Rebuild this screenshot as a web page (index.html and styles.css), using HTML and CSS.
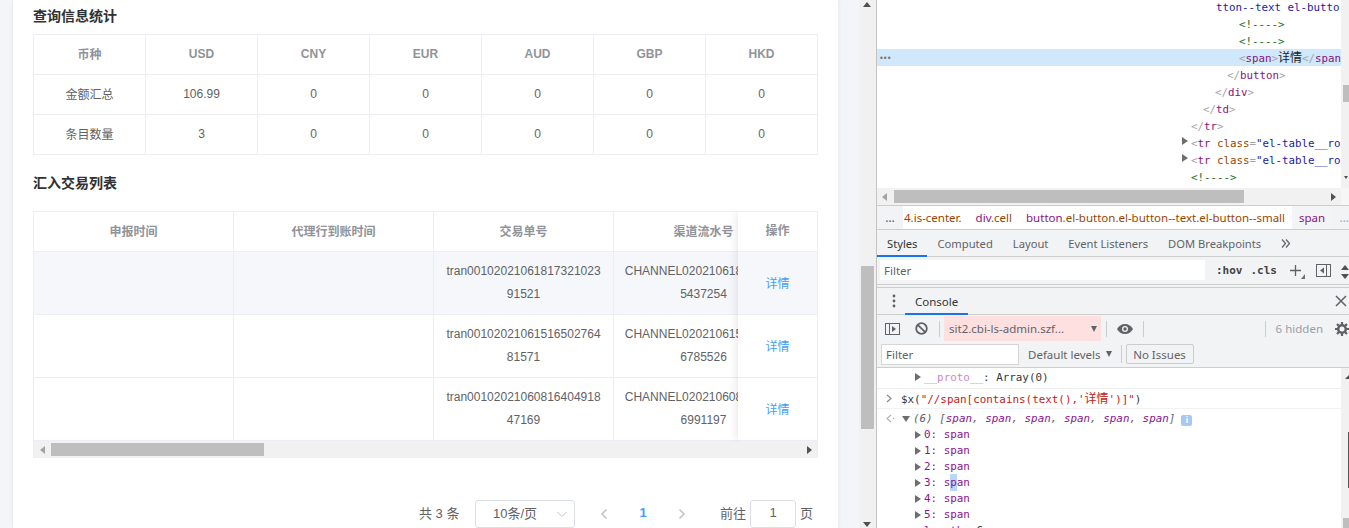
FILE: index.html
```html
<!DOCTYPE html>
<html lang="zh">
<head>
<meta charset="utf-8">
<title>查询信息统计</title>
<link rel="stylesheet" href="styles.css">
</head>
<body>
<div class="app">
  <main class="page">
    <section class="card">
      <h2 class="title title-first">查询信息统计</h2>
      <div class="tbl-wrap">
        <table class="tbl">
          <tr><th>币种</th><th>USD</th><th>CNY</th><th>EUR</th><th>AUD</th><th>GBP</th><th>HKD</th></tr>
          <tr><td>金额汇总</td><td>106.99</td><td>0</td><td>0</td><td>0</td><td>0</td><td>0</td></tr>
          <tr><td>条目数量</td><td>3</td><td>0</td><td>0</td><td>0</td><td>0</td><td>0</td></tr>
        </table>
      </div>
      <h2 class="title title-second">汇入交易列表</h2>
      <div class="tbl-wrap list-wrap">
        <div class="list-clip">
          <table class="tbl list">
            <tr><th class="w200">申报时间</th><th class="w200">代理行到账时间</th><th class="w180">交易单号</th><th class="w180">渠道流水号</th></tr>
            <tr class="hl"><td></td><td></td><td>tran0010202106181732102391521</td><td>CHANNEL0202106181732105437254</td></tr>
            <tr><td></td><td></td><td>tran0010202106151650276481571</td><td>CHANNEL0202106151650276785526</td></tr>
            <tr><td></td><td></td><td>tran0010202106081640491847169</td><td>CHANNEL0202106081640496991197</td></tr>
          </table>
        </div>
        <div class="fixed-col">
          <div class="fx-head">操作</div>
          <div class="fx-cell hl">详情</div>
          <div class="fx-cell">详情</div>
          <div class="fx-cell">详情</div>
        </div>
        <div class="hbar list-bar">
          <span class="arr arr-l"></span>
          <span class="thumb list-thumb"></span>
          <span class="arr arr-r"></span>
        </div>
      </div>
      <div class="pager">
        <span class="pg-total">共 3 条</span>
        <div class="pg-select"><span>10条/页</span>
          <svg class="pg-caret" width="12" height="12" viewBox="0 0 12 12"><path d="M1.5 4l4.500 4.500L10.500 4" fill="none" stroke="#c0c4cc" stroke-width="1"/></svg>
        </div>
        <svg class="pg-prev" width="10" height="12" viewBox="0 0 10 12"><path d="M7.500 1.500L3 6l4.500 4.500" fill="none" stroke="#c0c4cc" stroke-width="1.600"/></svg>
        <span class="pg-num">1</span>
        <svg class="pg-next" width="10" height="12" viewBox="0 0 10 12"><path d="M2.500 1.500L7 6l-4.500 4.500" fill="none" stroke="#c0c4cc" stroke-width="1.600"/></svg>
        <span class="pg-go">前往</span>
        <div class="pg-input">1</div>
        <span class="pg-unit">页</span>
      </div>
    </section>
  </main>

  <aside class="page-scroll">
    <span class="arr arr-u"></span>
    <span class="page-thumb"></span>
    <span class="arr arr-d"></span>
  </aside>

  <div class="devtools">
    <div class="elements">
      <div class="el-tree">
        <div class="el-row i-tton"><span class="v">tton--text el-butto</span></div>
        <div class="el-row i6"><span class="c">&lt;!----&gt;</span></div>
        <div class="el-row i6"><span class="c">&lt;!----&gt;</span></div>
        <div class="el-row i6 sel"><span class="dots">•••</span><span class="b">&lt;</span><span class="t">span</span><span class="b">&gt;</span><span class="txt">详情</span><span class="b">&lt;/</span><span class="t">span</span></div>
        <div class="el-row i5"><span class="b">&lt;/</span><span class="t">button</span><span class="b">&gt;</span></div>
        <div class="el-row i4"><span class="b">&lt;/</span><span class="t">div</span><span class="b">&gt;</span></div>
        <div class="el-row i3"><span class="b">&lt;/</span><span class="t">td</span><span class="b">&gt;</span></div>
        <div class="el-row i2"><span class="b">&lt;/</span><span class="t">tr</span><span class="b">&gt;</span></div>
        <div class="el-row i2"><span class="tri tri-el"></span><span class="b">&lt;</span><span class="t">tr</span> <span class="a">class</span><span class="b">=</span><span class="v">"el-table__ro</span></div>
        <div class="el-row i2"><span class="tri tri-el"></span><span class="b">&lt;</span><span class="t">tr</span> <span class="a">class</span><span class="b">=</span><span class="v">"el-table__ro</span></div>
        <div class="el-row i2"><span class="c">&lt;!----&gt;</span></div>
      </div>
      <div class="el-vbar"><span class="el-vthumb"></span><span class="arr arr-d el-vdown"></span></div>
    </div>
    <div class="el-hbar">
      <div class="hbar el-hbar-track">
        <span class="arr arr-l"></span>
        <span class="thumb el-thumb"></span>
        <span class="arr arr-r"></span>
      </div>
      <div class="corner"></div>
    </div>
    <nav class="crumbs">
      <span class="cr-dots">…</span>
      <div class="cr-white">
        <span class="cr cr-first"><span class="ca">4.is-center.</span></span>
        <span class="cr"><span class="ct">div</span><span class="ca">.cell</span></span>
        <span class="cr"><span class="ct">button</span><span class="ca">.el-button.el-button--text.el-button--small</span></span>
      </div>
      <span class="cr cr-cur"><span class="ct">span</span></span>
      <span class="cr-dots cr-dots-r">…</span>
    </nav>
    <div class="tabs">
      <span class="tab on">Styles</span>
      <span class="tab">Computed</span>
      <span class="tab">Layout</span>
      <span class="tab">Event Listeners</span>
      <span class="tab">DOM Breakpoints</span>
      <span class="tab more">
        <svg width="10" height="9" viewBox="0 0 10 9"><path d="M1 .5L4.500 4.500 1 8.500M5 .5L8.500 4.500 5 8.500" fill="none" stroke="#5f6368" stroke-width="1.200"/></svg>
      </span>
    </div>
    <div class="styles-filter">
      <div class="sf-input">Filter</div>
      <span class="mono-btn hov">:hov</span>
      <span class="mono-btn cls">.cls</span>
      <svg class="plus" width="16" height="14" viewBox="0 0 16 14"><path d="M5.500 0v11M0 5.500h11" stroke="#5f6368" stroke-width="1.300" fill="none"/><path d="M15 9v5h-4z" fill="#6e6e6e"/></svg>
      <svg class="toggle" width="15" height="13" viewBox="0 0 15 13"><rect x=".5" y=".5" width="14" height="12" fill="none" stroke="#5f6368"/><path d="M10.500 0v13" stroke="#5f6368"/><path d="M8 3.500v6L4 6.500z" fill="#5f6368"/></svg>
      <span class="sf-step"><span class="arr arr-u"></span><span class="arr arr-d"></span></span>
    </div>
    <div class="drawer-head">
      <svg class="kebab" width="4" height="14" viewBox="0 0 4 14"><circle cx="2" cy="2" r="1.400" fill="#5f6368"/><circle cx="2" cy="7" r="1.400" fill="#5f6368"/><circle cx="2" cy="12" r="1.400" fill="#5f6368"/></svg>
      <span class="tab on drawer-tab">Console</span>
      <svg class="close" width="12" height="12" viewBox="0 0 12 12"><path d="M1 1l10 10M11 1L1 11" stroke="#5f6368" stroke-width="1.500"/></svg>
    </div>
    <div class="con-toolbar">
      <svg class="ic-side" width="15" height="12" viewBox="0 0 15 12"><rect x=".5" y=".5" width="14" height="11" fill="none" stroke="#5f6368"/><path d="M4.500 0v12" stroke="#5f6368"/><path d="M7 3v6l4-3z" fill="#5f6368"/></svg>
      <svg class="ic-block" width="13" height="13" viewBox="0 0 13 13"><circle cx="6.500" cy="6.500" r="5.300" fill="none" stroke="#5f6368" stroke-width="1.800"/><path d="M2.800 2.800l7.400 7.400" stroke="#5f6368" stroke-width="1.800"/></svg>
      <span class="sep sep-a"></span>
      <div class="ctx"><span>sit2.cbi-ls-admin.szf...</span><span class="tri-d"></span></div>
      <span class="sep sep-b"></span>
      <svg class="ic-eye" width="16" height="10" viewBox="0 0 16 10"><path d="M8 0C4.500 0 1.600 2 0 5c1.600 3 4.500 5 8 5s6.400-2 8-5c-1.600-3-4.500-5-8-5z" fill="#5f6368"/><circle cx="8" cy="5" r="3" fill="#f1f3f4"/><circle cx="8" cy="5" r="1.700" fill="#5f6368"/></svg>
      <span class="sep sep-c"></span>
      <span class="grow"></span>
      <span class="sep sep-d"></span>
      <span class="hidden-n">6 hidden</span>
      <svg class="ic-gear" width="14" height="14" viewBox="0 0 14 14"><circle cx="7" cy="7" r="3.800" fill="none" stroke="#5f6368" stroke-width="2.600"/><path d="M7 0v3M7 11v3M0 7h3M11 7h3M2 2l2 2M10 10l2 2M12 2l-2 2M4 10l-2 2" stroke="#5f6368" stroke-width="2.200"/></svg>
    </div>
    <div class="con-filter">
      <div class="cf-input">Filter</div>
      <span class="levels">Default levels</span><span class="tri-d tri-lv"></span>
      <span class="sep sep-e"></span>
      <span class="issues">No Issues</span>
    </div>
    <div class="console">
      <div class="con-body">
        <div class="log-row first-row"><span class="tri tri-c"></span><span class="proto">__proto__</span><span class="plain">: Array(0)</span></div>
        <div class="cmd-row"><span class="chev"><svg width="7" height="9" viewBox="0 0 7 9"><path d="M1 1l4 3.500-4 3.500" fill="none" stroke="#8a8a8a" stroke-width="1.200"/></svg></span><span class="plain">$x(</span><span class="str">"//span[contains(text(),'<span class="cjk">详情</span>')]"</span><span class="plain">)</span></div>
        <div class="res-row"><span class="chev back"><svg width="9" height="9" viewBox="0 0 9 9"><path d="M5 1L1 4.500 5 8" fill="none" stroke="#b0b0b0" stroke-width="1.100"/><circle cx="7.500" cy="4.500" r=".8" fill="#b0b0b0"/></svg></span><span class="tri-open"></span><i class="ital">(6) [<span class="key">span</span>, <span class="key">span</span>, <span class="key">span</span>, <span class="key">span</span>, <span class="key">span</span>, <span class="key">span</span>]</i><span class="info">i</span></div>
        <div class="log-row"><span class="tri tri-c"></span><span class="key">0:</span> <span class="key">span</span></div>
        <div class="log-row"><span class="tri tri-c"></span><span class="key">1:</span> <span class="key">span</span></div>
        <div class="log-row"><span class="tri tri-c"></span><span class="key">2:</span> <span class="key">span</span></div>
        <div class="log-row"><span class="tri tri-c"></span><span class="key">3:</span> <span class="key">s<mark class="pick">p</mark>an</span></div>
        <div class="log-row"><span class="tri tri-c"></span><span class="key">4:</span> <span class="key">span</span></div>
        <div class="log-row"><span class="tri tri-c"></span><span class="key">5:</span> <span class="key">span</span></div>
        <div class="log-row"><span class="key">length</span><span class="plain">: 6</span></div>
      </div>
      <div class="con-vbar"><span class="arr arr-u con-up"></span><span class="con-edge"></span><span class="con-thumb"></span></div>
    </div>
  </div>
</div>
</body>
</html>
```
FILE: styles.css
```css
* { box-sizing: border-box; }
html, body { margin: 0; height: 100%; overflow: hidden; }
body { font-family: "Liberation Sans", "Noto Sans CJK SC", sans-serif; font-size: 12px; color: #606266; }
.app { display: flex; width: 1349px; height: 528px; overflow: hidden; }

/* page */
.page { width: 859px; flex: none; height: 528px; padding: 0 21px 0 13px; background: #f3f5f9; overflow: hidden; }
.card { width: 825px; height: 528px; background: #fff; padding: 0 20px; box-shadow: 0 0 5px rgba(0, 0, 0, .08); }
.title { margin: 0; font-size: 14px; line-height: 16px; font-weight: 700; color: #303133; }
.title-first { padding-top: 8px; margin-bottom: 10px; }
.title-second { margin-top: 20px; margin-bottom: 20px; }
.tbl-wrap { width: 785px; border-top: 1px solid #ebeef5; border-left: 1px solid #ebeef5; }
.tbl { border-collapse: separate; border-spacing: 0; table-layout: fixed; width: 784px; }
.tbl th, .tbl td { width: 112px; height: 40px; padding: 0 0 2px; text-align: center; border-right: 1px solid #ebeef5; border-bottom: 1px solid #ebeef5; font-size: 12px; }
.tbl th { color: #909399; font-weight: 700; }
.tbl td { color: #606266; }

.list-wrap { position: relative; border-right: 1px solid #ebeef5; height: 247px; }
.list-clip { width: 783px; height: 229px; overflow: hidden; }
.tbl.list { width: 760px; }
.tbl.list th.w200 { width: 200px; }
.tbl.list th.w180 { width: 180px; }
.tbl.list td { height: 63px; padding: 8px 10px; line-height: 23px; word-break: break-all; }
.tbl.list tr.hl td { background: #f5f7fa; }
.fixed-col { position: absolute; top: 0; right: 0; width: 79px; background: #fff; box-shadow: 0 0 10px rgba(0, 0, 0, .12); clip-path: inset(0 0 -12px -12px); }
.fx-head { height: 40px; line-height: 38px; text-align: center; font-weight: 700; color: #909399; border-bottom: 1px solid #ebeef5; }
.fx-cell { height: 63px; line-height: 65px; text-align: center; color: #409eff; border-bottom: 1px solid #ebeef5; }
.fx-cell.hl { background: #f5f7fa; }

.hbar { display: flex; align-items: center; background: #f1f1f1; position: relative; }
.list-bar { height: 17px; width: 783px; padding-left: 17px; }
.thumb { display: block; background: #bebebe; }
.list-thumb { width: 213px; height: 13px; }
.arr { width: 0; height: 0; display: block; border-style: solid; border-color: transparent; }
.arr-l { position: absolute; left: 6px; top: 50%; margin-top: -4px; border-width: 4px 5px 4px 0; border-right-color: #a3a3a3; }
.arr-r { position: absolute; right: 5px; top: 50%; margin-top: -4px; border-width: 4px 0 4px 5px; border-left-color: #505050; }
.arr-u { border-width: 0 4px 5px; border-bottom-color: #505050; }
.arr-d { border-width: 5px 4px 0; border-top-color: #505050; }

.pager { display: flex; align-items: center; height: 28px; margin-top: 42px; font-size: 13px; color: #606266; padding-left: 386px; }
.pager span { padding-bottom: 4px; }
.pg-total { width: 56px; flex: none; }
.pg-select { width: 100px; height: 28px; flex: none; border: 1px solid #dcdfe6; border-radius: 3px; display: flex; align-items: center; justify-content: space-between; padding: 0 6px 0 17px; }
.pg-prev { margin-left: 24px; flex: none; }
.pg-num { margin-left: 25px; width: 18px; flex: none; text-align: center; color: #409eff; font-weight: 700; }
.pg-next { margin-left: 25px; flex: none; }
.pg-go { margin-left: 33px; flex: none; }
.pg-input { margin-left: 4px; width: 46px; height: 28px; flex: none; border: 1px solid #dcdfe6; border-radius: 3px; text-align: center; line-height: 24px; }
.pg-unit { margin-left: 4px; flex: none; }

/* page scrollbar */
.page-scroll { width: 18px; flex: none; height: 528px; background: #f1f1f1; border-right: 1px solid #c4c4c4; position: relative; padding: 266px 2px 0; }
.page-scroll .arr-u { position: absolute; left: 4px; top: 2px; }
.page-scroll .arr-d { position: absolute; left: 4px; bottom: 1px; }
.page-thumb { display: block; width: 13px; height: 163px; background: #bebebe; }

/* devtools */
.devtools { width: 472px; flex: none; height: 528px; display: flex; flex-direction: column; background: #f1f3f4; font-family: "Noto Sans", "Noto Sans CJK SC", sans-serif; font-size: 11.5px; color: #5f6368; overflow: hidden; }
.elements { height: 188px; flex: none; display: flex; background: #fff; overflow: hidden; }
.el-tree { width: 464px; flex: none; margin-top: -2px; font-family: "DejaVu Sans Mono", "Noto Sans CJK SC", monospace; font-size: 10.8px; overflow: hidden; }
.el-row { height: 17px; line-height: 19px; white-space: pre; position: relative; overflow: hidden; }
.i-tton { padding-left: 339px; }
.i6 { padding-left: 362px; }
.i5 { padding-left: 350px; }
.i4 { padding-left: 338px; }
.i3 { padding-left: 326px; }
.i2 { padding-left: 314px; }
.sel { background: #cfe8fc; }
.dots { position: absolute; left: 2px; top: 0; color: #777; font-size: 8px; letter-spacing: -1px; }
.b { color: #a5a5a5; }
.t { color: #881280; }
.a { color: #994500; }
.v { color: #1a1aa6; }
.c { color: #236e25; }
.txt { color: #222; font-size: 12px; }
.tri { display: inline-block; width: 0; height: 0; border-style: solid; border-color: transparent; border-width: 4px 0 4px 6px; border-left-color: #6e6e6e; }
.tri-el { position: absolute; left: 305px; top: 3px; }
.el-vbar { width: 8px; flex: none; background: #f1f1f1; padding-top: 85px; padding-left: 2px; position: relative; }
.el-vthumb { display: block; width: 6px; height: 17px; background: #bebebe; }
.el-vdown { position: absolute; left: 3px; top: 176px; border-width: 3px 2px 0; }
.el-hbar { height: 17px; flex: none; display: flex; }
.el-hbar-track { width: 464px; padding-left: 17px; height: 17px; }
.el-thumb { width: 350px; height: 13px; }
.el-hbar-track .arr-l { left: 5px; }
.corner { flex: 1; background: #f6f6f6; }

.crumbs { height: 25px; flex: none; display: flex; align-items: center; border-top: 1px solid #cdcdcd; border-bottom: 1px solid #cdcdcd; overflow: hidden; white-space: nowrap; }
.cr-dots { width: 26px; flex: none; text-align: center; color: #3c5a8a; font-size: 12px; }
.cr-dots-r { color: #aaa; width: 18px; text-align: right; }
.cr-white { display: flex; height: 100%; align-items: center; background: #fff; flex: none; width: 389px; }
.cr { padding: 0 7px; flex: none; }
.cr-first { padding-left: 1px; }
.cr-cur { background: #f3f4f5; height: 100%; display: flex; align-items: center; width: 39px; }
.ct { color: #881280; }
.ca { color: #994500; }

.tabs { height: 27px; flex: none; display: flex; align-items: stretch; border-bottom: 1px solid #cdcdcd; font-size: 11.2px; }
.tab { padding: 0 10px; line-height: 27px; position: relative; flex: none; }
.tab.on { color: #333; }
.tab.on::after { content: ""; position: absolute; left: 0; right: 0; bottom: -1px; height: 2px; background: #1a73e8; }
.more { padding-left: 10px; display: flex; align-items: center; }
.styles-filter { height: 28px; flex: none; display: flex; align-items: center; padding: 0 0 1px 3px; border-bottom: 1px solid #cdcdcd; position: relative; }
.sf-input { width: 325px; height: 20px; flex: none; background: #fff; line-height: 21px; padding-left: 4px; }
.mono-btn { font-family: "DejaVu Sans Mono", monospace; font-size: 11px; font-weight: 700; color: #444; flex: none; }
.hov { margin-left: 11px; }
.cls { margin-left: 8px; }
.plus { margin-left: 13px; flex: none; margin-top: 3px; }
.toggle { margin-left: 10px; flex: none; }
.sf-step { position: absolute; right: 0; top: 8px; display: flex; flex-direction: column; gap: 4px; }
.drawer-head { height: 28px; flex: none; display: flex; align-items: center; border-top: 1px solid #cdcdcd; margin-top: 2px; border-bottom: 1px solid #cdcdcd; padding-left: 15px; position: relative; }
.drawer-head .tab { margin-left: 9px; height: 26px; line-height: 28px; }
.close { position: absolute; right: 2px; top: 7px; }
.con-toolbar { height: 27px; flex: none; display: flex; align-items: center; padding-left: 8px; position: relative; }
.ic-block { margin-left: 15px; flex: none; }
.sep { width: 1px; height: 16px; background: #ccc; flex: none; }
.sep-a { margin-left: 11px; }
.ctx { margin-left: 4px; width: 157px; height: 25px; flex: none; background: #ffe0e0; display: flex; align-items: center; justify-content: space-between; padding: 0 4px 0 5px; }
.tri-d { width: 0; height: 0; display: block; border-style: solid; border-color: transparent; border-width: 6px 3.500px 0; border-top-color: #5f6368; flex: none; }
.sep-b { margin-left: 5px; }
.ic-eye { margin-left: 10px; flex: none; }
.sep-c { margin-left: 10px; }
.grow { flex: 1; }
.hidden-n { margin-left: 10px; color: #9aa0a6; flex: none; }
.ic-gear { margin-left: 12px; flex: none; }
.con-filter { height: 26px; flex: none; display: flex; align-items: center; padding: 0 0 1px 4px; border-bottom: 1px solid #cdcdcd; }
.cf-input { width: 138px; height: 21px; flex: none; background: #fff; border: 1px solid #d5d5d5; line-height: 20px; padding-left: 4px; }
.levels { margin-left: 9px; flex: none; }
.tri-lv { margin-left: 5px; }
.sep-e { margin-left: 9px; height: 18px; }
.issues { margin-left: 4px; width: 68px; height: 20px; flex: none; border: 1px solid #ccc; border-radius: 2px; text-align: center; line-height: 19px; }

.console { flex: 1; min-height: 0; display: flex; background: #fff; overflow: hidden; font-family: "DejaVu Sans Mono", "Noto Sans CJK SC", monospace; font-size: 10.9px; }
.con-body { width: 464px; flex: none; overflow: hidden; }
.log-row { height: 16px; line-height: 16px; padding-left: 47px; position: relative; white-space: pre; }
.log-row .tri { position: absolute; left: 38px; top: 4px; }
.first-row { height: 21px; line-height: 19px; border-bottom: 1px solid #eee; }
.first-row .tri { top: 5px; }
.proto { color: #c78bc7; }
.plain { color: #303942; }
.key { color: #881391; }
.str { color: #c41a16; }
.cjk { font-size: 12px; }
.cmd-row { height: 20px; line-height: 20px; padding-left: 24px; position: relative; white-space: pre; border-bottom: 1px solid #f2f2f2; }
.chev { position: absolute; left: 9px; top: 1px; }
.res-row { height: 18px; line-height: 20px; padding-left: 36px; position: relative; white-space: pre; color: #303942; }
.tri-open { position: absolute; left: 25px; top: 7px; width: 0; height: 0; border-style: solid; border-color: transparent; border-width: 6px 4px 0; border-top-color: #6e6e6e; }
.ital { font-style: italic; color: #5f6368; }
.info { display: inline-block; margin-left: 6px; width: 11px; height: 11px; border-radius: 2px; background: #a9c7f5; color: #fff; font: 700 9px/11px "Liberation Sans", sans-serif; text-align: center; vertical-align: -1px; }
.pick { background: #b8d8fb; color: inherit; padding: 2px 0; }
.con-vbar { flex: 1; background: #f1f1f1; position: relative; }
.con-up { position: absolute; left: 4px; top: 7px; border-width: 0 4px 4px; }
.con-edge { position: absolute; right: 0; top: 64px; width: 1px; height: 56px; background: #555; }
.con-thumb { position: absolute; left: 2px; right: 0; top: 150px; height: 10px; background: #bebebe; }
```
